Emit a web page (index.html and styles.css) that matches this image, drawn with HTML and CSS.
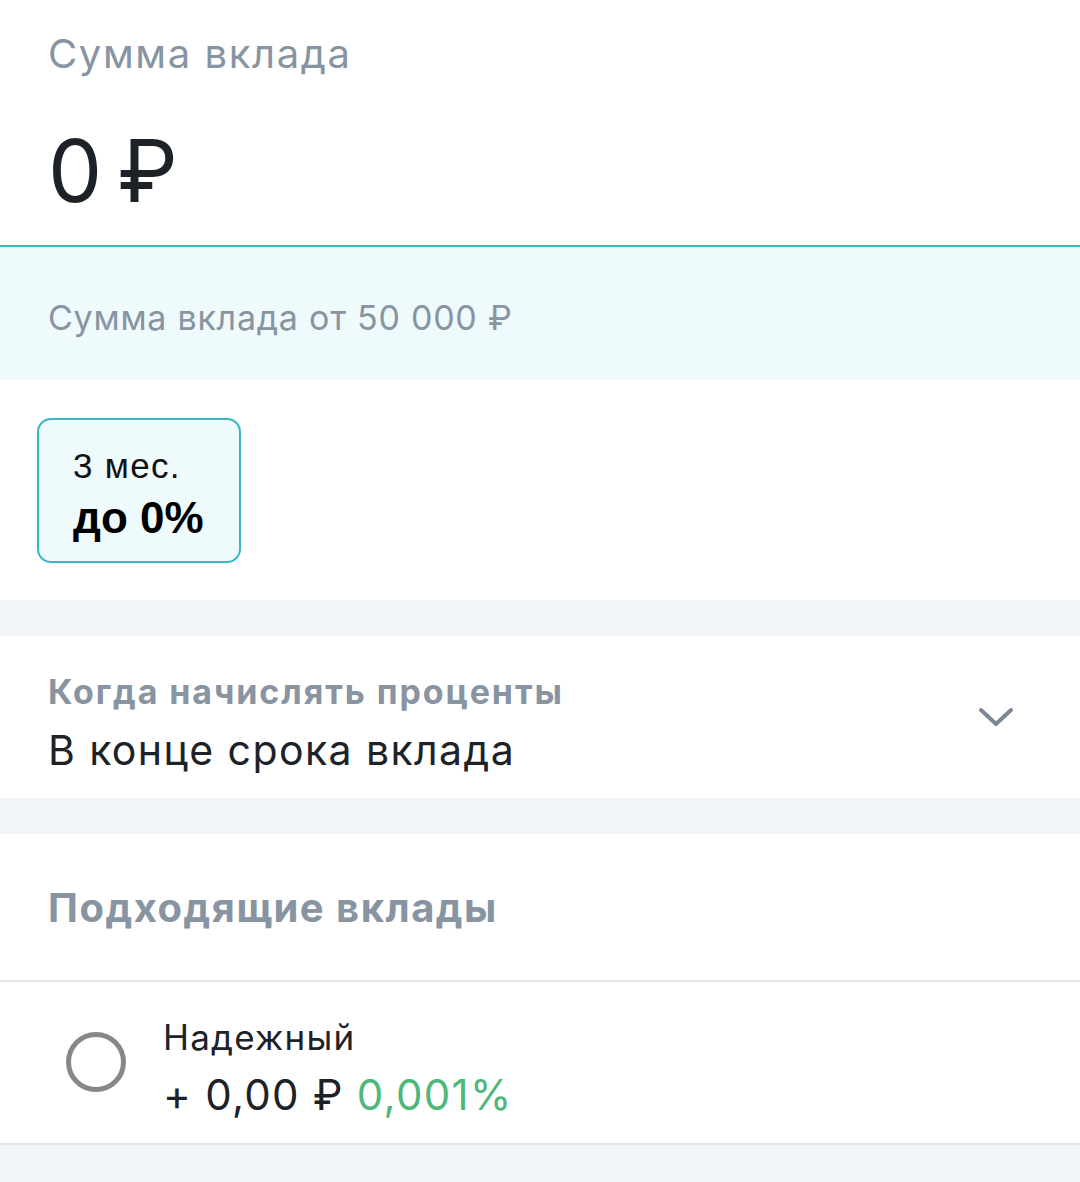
FILE: index.html
```html
<!DOCTYPE html>
<html lang="ru">
<head>
<meta charset="utf-8">
<link rel="stylesheet" href="styles.css">
</head>
<body>
<div class="page">
  <section class="amount">
    <div class="amount-label">Сумма вклада</div>
    <div class="amount-value">0 ₽</div>
  </section>
  <section class="hint">
    <div class="hint-text">Сумма вклада от 50 000 ₽</div>
  </section>
  <section class="terms">
    <div class="chip">
      <div class="chip-term">3 мес.</div>
      <div class="chip-rate">до 0%</div>
    </div>
  </section>
  <div class="gap"></div>
  <section class="select">
    <div class="select-text">
      <div class="select-label">Когда начислять проценты</div>
      <div class="select-value">В конце срока вклада</div>
    </div>
    <svg class="chevron" width="36" height="24" viewBox="0 0 36 24">
      <path d="M3 5 L18 19 L33 5" fill="none" stroke="#7c8896" stroke-width="4" stroke-linecap="round" stroke-linejoin="round"/>
    </svg>
  </section>
  <div class="gap"></div>
  <section class="list-head">
    <div class="list-title">Подходящие вклады</div>
  </section>
  <section class="offer">
    <span class="radio"></span>
    <div class="offer-text">
      <div class="offer-name">Надежный</div>
      <div class="offer-sum">+ 0,00 ₽ <span class="offer-rate">0,001%</span></div>
    </div>
  </section>
</div>
</body>
</html>
```
FILE: styles.css
```css
html, body {
  margin: 0;
  padding: 0;
}
body {
  background: #f2f5f8;
  font-family: Inter, "Noto Sans", "DejaVu Sans", sans-serif;
  width: 1080px;
  height: 1182px;
  overflow: hidden;
}
.page {
  display: flex;
  flex-direction: column;
}
.amount {
  background: #fff;
  height: 247px;
  box-sizing: border-box;
  padding: 28px 48px 0;
  border-bottom: 2px solid #3ab6c6;
}
.amount-label {
  font-size: 40px;
  line-height: 52px;
  letter-spacing: 1.6px;
  color: #8794a1;
}
.amount-value {
  margin-top: 43px;
  font-size: 86px;
  line-height: 96px;
  word-spacing: -9px;
  color: #1d2228;
}
.hint {
  background: #effafd;
  height: 133px;
  box-sizing: border-box;
  display: flex;
  align-items: center;
  padding: 8px 48px 0;
}
.hint-text {
  font-size: 34px;
  letter-spacing: 0.75px;
  color: #8894a1;
}
.terms {
  background: #fff;
  height: 220px;
  box-sizing: border-box;
  padding: 38px 37px 0;
}
.chip {
  width: 204px;
  height: 145px;
  box-sizing: border-box;
  border: 2.5px solid #3ab6c6;
  border-radius: 14px;
  background: #effafd;
  padding: 25px 0 0 34px;
}
.chip-term {
  font-family: "Liberation Sans", Arial, sans-serif;
  font-size: 35px;
  line-height: 42px;
  letter-spacing: 1.3px;
  color: #111;
}
.chip-rate {
  font-family: "Liberation Sans", Arial, sans-serif;
  font-weight: 700;
  font-size: 44px;
  line-height: 52px;
  margin-top: 5px;
  color: #000;
}
.gap {
  height: 36px;
}
.select {
  background: #fff;
  height: 162px;
  box-sizing: border-box;
  display: flex;
  align-items: flex-start;
  padding: 35px 66px 0 48px;
}
.select-text {
  flex: 1;
}
.select-label {
  font-size: 34px;
  font-weight: 700;
  line-height: 42px;
  letter-spacing: 1.9px;
  color: #8894a1;
}
.select-value {
  margin-top: 9px;
  font-size: 41px;
  line-height: 56px;
  letter-spacing: 1.4px;
  color: #1d2228;
}
.chevron {
  align-self: center;
  margin-top: -35px;
}
.list-head {
  background: #fff;
  height: 148px;
  box-sizing: border-box;
  display: flex;
  align-items: center;
  padding: 0 48px;
  border-bottom: 2px solid #e1e5e9;
}
.list-title {
  font-size: 40px;
  font-weight: 700;
  letter-spacing: 1.5px;
  color: #8794a1;
}
.offer {
  background: #fff;
  height: 163px;
  box-sizing: border-box;
  display: flex;
  align-items: flex-start;
  padding: 31px 0 0 66px;
  border-bottom: 2px solid #e1e5e9;
}
.radio {
  width: 60px;
  height: 60px;
  box-sizing: border-box;
  border: 5px solid #878787;
  border-radius: 50%;
  margin-right: 37px;
  margin-top: 19px;
}
.offer-name {
  font-size: 35px;
  line-height: 48px;
  letter-spacing: 1.2px;
  color: #1d2228;
}
.offer-sum {
  margin-top: 3px;
  font-size: 42px;
  line-height: 62px;
  letter-spacing: 1.3px;
  color: #1d2228;
}
.offer-rate {
  color: #4db87a;
}
```
